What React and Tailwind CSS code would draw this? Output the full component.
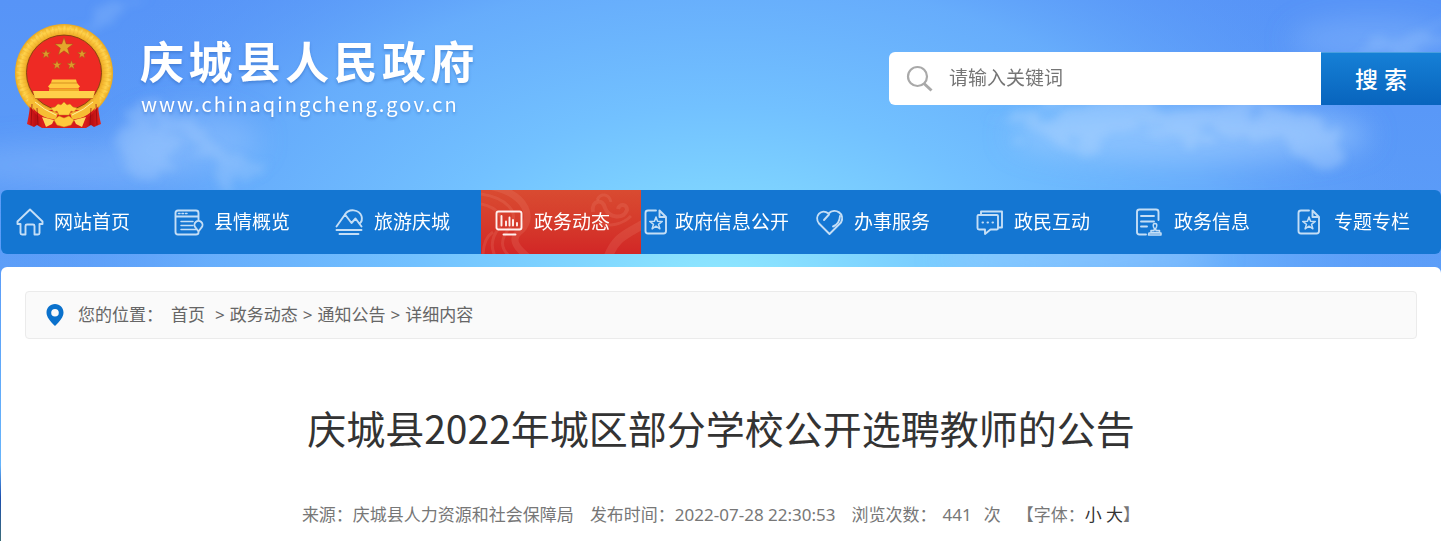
import React from "react";

const star = (cx, cy, r) =>
  Array.from({ length: 10 }, (_, i) => {
    const a = -Math.PI / 2 + (i * Math.PI) / 5;
    const q = i % 2 ? r * 0.4 : r;
    return `${(cx + q * Math.cos(a)).toFixed(2)},${(cy + q * Math.sin(a)).toFixed(2)}`;
  }).join(" ");

function Sky() {
  return (
    <svg
      className="absolute inset-x-0 top-0 h-[541px] w-full"
      viewBox="0 0 1441 541"
      preserveAspectRatio="none"
      aria-hidden="true"
    >
      <defs>
        <linearGradient id="base" x1="0" y1="0" x2="0" y2="1">
          <stop offset="0" stopColor="#5794f7" />
          <stop offset="0.5" stopColor="#5c9ef8" />
          <stop offset="0.86" stopColor="#66b4fb" />
          <stop offset="0.92" stopColor="#1c4fae" />
          <stop offset="1" stopColor="#3c6c78" />
        </linearGradient>
        <radialGradient id="glow" gradientUnits="userSpaceOnUse" cx="0" cy="0" r="1" gradientTransform="translate(720 300) scale(740 460)">
          <stop offset="0" stopColor="#92ecff" />
          <stop offset="0.2" stopColor="#80d6ff" />
          <stop offset="0.42" stopColor="#72c1ff" />
          <stop offset="0.7" stopColor="#68affc" stopOpacity="0.9" />
          <stop offset="1" stopColor="#5a98f8" stopOpacity="0" />
        </radialGradient>
        <filter id="soft" x="-30%" y="-50%" width="160%" height="200%">
          <feGaussianBlur stdDeviation="14" />
        </filter>
        <filter id="puff" x="-20%" y="-50%" width="140%" height="200%">
          <feTurbulence type="fractalNoise" baseFrequency="0.03 0.05" numOctaves="5" seed="11" result="n" />
          <feDisplacementMap in="SourceGraphic" in2="n" scale="54" xChannelSelector="R" yChannelSelector="G" />
          <feGaussianBlur stdDeviation="4" />
        </filter>
      </defs>
      <rect width="1441" height="541" fill="url(#base)" />
      <rect width="1441" height="300" fill="url(#glow)" />
      <g filter="url(#soft)" fill="#9fcbff">
        <ellipse cx="70" cy="165" rx="120" ry="22" opacity="0.3" />
        <ellipse cx="190" cy="140" rx="70" ry="30" opacity="0.4" />
        <ellipse cx="1190" cy="135" rx="180" ry="28" opacity="0.6" />
        <ellipse cx="1370" cy="40" rx="80" ry="22" opacity="0.3" />
        <ellipse cx="1080" cy="258" rx="140" ry="12" opacity="0.6" />
      </g>
      <g filter="url(#puff)" fill="#b5d9ff">
        <path d="M125 112Q150 95 165 118Q210 122 240 158Q262 160 266 168L236 184L216 162L178 140L160 170L128 166Z" opacity="0.26" />
        <path d="M990 118Q1100 96 1200 106Q1300 104 1335 130L1350 172L1310 160L1260 134L1190 142L1140 128L1080 146Z" opacity="0.34" />
        <path d="M1335 50L1441 30V50L1380 62Z" opacity="0.2" />
        <path d="M70 22Q110 2 150 0L100 24Z" opacity="0.2" />
      </g>
    </svg>
  );
}

function Emblem() {
  return (
    <svg className="h-[108px] w-[100px] shrink-0" viewBox="14 22 100 108" role="img" aria-label="国徽">
      <defs>
        <radialGradient id="gold" gradientUnits="userSpaceOnUse" cx="64" cy="73" r="49">
          <stop offset="0.74" stopColor="#c98616" />
          <stop offset="0.8" stopColor="#f2b22c" />
          <stop offset="0.9" stopColor="#ffd24a" />
          <stop offset="1" stopColor="#eba91f" />
        </radialGradient>
        <linearGradient id="drape" x1="0" y1="0" x2="1" y2="0">
          <stop offset="0" stopColor="#e3231f" />
          <stop offset="0.5" stopColor="#b90f12" />
          <stop offset="1" stopColor="#e8261f" />
        </linearGradient>
      </defs>
      <circle cx="64" cy="73" r="49" fill="url(#gold)" />
      <circle cx="64" cy="73" r="43" fill="none" stroke="#d9951c" strokeWidth="7" strokeDasharray="1 3" opacity="0.2" />
      <circle cx="64" cy="73" r="46" fill="none" stroke="#fff09a" strokeWidth="3" strokeDasharray="2 4" opacity="0.25" />
      <circle cx="64" cy="72.600" r="37.500" fill="#ee2a24" stroke="#8d4310" strokeWidth="1" />
      <polygon points={star(64, 47, 9.5)} fill="#e5a52b" stroke="#a5541a" strokeWidth="0.500" />
      {[[46, 54], [82, 54], [57, 65], [71.5, 65]].map(([x, y]) => (
        <polygon key={x} points={star(x, y, 4.8)} fill="#dd9a2a" stroke="#a5541a" strokeWidth="0.400" />
      ))}
      <path d="M52 79.500H76L77 83L80 86.500L78 88.500H50L48 86.500L51 83Z" fill="#ffc93f" />
      <path d="M51 83H77" stroke="#c67812" strokeWidth="0.700" />
      <path d="M49 88.500H79V92H49Z" fill="#eda827" />
      <path d="M33 91H95L93 98.500H35Z" fill="#ffd04a" />
      <path d="M35 98.500H93" stroke="#b9540f" strokeWidth="0.600" />
      <path d="M29 97C31 105 29 115 27 124L34 127L37 125L42 128H45L43 111Z" fill="url(#drape)" />
      <path d="M99 97C97 105 99 115 101 124L94 127L91 125L86 128H83L85 111Z" fill="url(#drape)" />
      <path d="M41 110L87 110L84 128H44Z" fill="#d71a1c" />
      <path d="M29 93C35 106 47 110 58 113L55 122C45 119 34 113 28 104Z" fill="#f7bd34" />
      <path d="M99 93C93 106 81 110 70 113L73 122C83 119 94 113 100 104Z" fill="#f7bd34" />
      <path d="M35 102Q44 110 56 115M93 102Q84 110 72 115" fill="none" stroke="#fff0a0" strokeWidth="1" />
      <path d="M33 108C42 119 54 120 64 120C74 120 86 119 95 108L94 112C86 122 74 123 64 123C54 123 42 122 34 112Z" fill="#d71a1c" />
      <path d="M55 107L58 104L61 105L64 102L67 105L70 104L73 107L77 108L74 112L71 111L69 115H59L57 111L54 112L51 108Z" fill="#ffd040" stroke="#d08c19" strokeWidth="0.500" />
      <path d="M54 120L59 116L64 118L69 116L74 120L71 125L64 127L57 125Z" fill="#ffc93b" stroke="#d08c19" strokeWidth="0.500" />
      <path d="M42 117L54 120L52 124L46 127Z M86 117L74 120L76 124L82 127Z" fill="#ffd65a" />
      <path d="M32 104L31 125M37 108L38 125M96 104L97 125M91 108L90 125" stroke="#8f090e" strokeWidth="0.700" />
    </svg>
  );
}

const StarDoc = () => (
  <>
    <path d="M14 4.500H6Q3.500 4.500 3.500 7V25Q3.500 27.500 6 27.500H21.500Q24 27.500 24 25V11L17.500 4.500V11H24" />
    <polygon strokeWidth="1.500" points={star(14, 17.5, 6.6)} />
  </>
);

const icons = {
  home: (
    <path d="M2.500 15.500L15 3.500L27.500 15.500V18H24.500V27Q24.500 28.500 23 28.500H19.500V20Q19.500 18.500 18 18.500H12Q10.500 18.500 10.500 20V28.500H7Q5.500 28.500 5.500 27V18H2.500Z" />
  ),
  profile: (
    <>
      <path d="M23.500 14V7Q23.500 4.500 21 4.500H3Q0.500 4.500 0.500 7V26Q0.500 28.500 3 28.500H21Q23.500 28.500 23.500 26.500M0.500 10.500H23.500" />
      <path strokeWidth="1.500" d="M3.500 7.500H5M7 7.500H8.500M10.500 7.500H12M6 15.500H18M6 19.500H18M6 23.500H21" />
      <path d="M23.500 25.500L20.500 21.500A4 4 0 1 1 26.500 21.500Z" />
    </>
  ),
  tour: (
    <>
      <path d="M1.500 20.500L10 8.500L16.500 17L20.500 12.500L26.500 20.500" />
      <path d="M10 8.500C14 2 24 3.500 26.500 10Q28 15 24.500 17.500M1.500 24H26.500M4.500 28H23.500" />
    </>
  ),
  news: (
    <>
      <rect x="1.500" y="5.500" width="25" height="18" rx="2" />
      <path d="M6.500 10V19.500M11 15.500V19.500M14.500 11.500V19.500M18 14V19.500M22 17V19.500M8.500 28.500H20.500" />
    </>
  ),
  doc: <StarDoc />,
  service: (
    <>
      <path d="M14.500 28L4 17.500C-1.500 10 6.500 2 13.500 7.500C20.500 1 30.500 8 26 16.500Z" />
      <path d="M9 14L14 8.500M25 10Q24.500 18 18 20.500" />
    </>
  ),
  talk: (
    <>
      <path d="M6 9V5.500H27V21.500H23.500" />
      <path d="M2.500 10Q2.500 9 3.500 9H22Q23 9 23 10V22Q23 23.500 22 23.500H15.500L10 28V23.500H4Q2.500 23.500 2.500 22Z" />
      <path strokeWidth="2" d="M7.500 16.500H8M12.500 16.500H13M17.500 16.500H18" />
    </>
  ),
  info: (
    <>
      <path d="M23.500 14V6Q23.500 3.500 21 3.500H4.500Q2 3.500 2 6V26Q2 28.500 4.500 28.500H11" />
      <path d="M6 10H19M6 15.500H19M6 20.500H12" />
      <path strokeWidth="1.500" d="M19 24.500Q20 22.500 18.500 21Q17.500 17.500 20 17.500Q22.500 17.500 21.500 21Q20 22.500 21 24.500H24.500V26.500H16V24.500ZM13.500 29H26V27H14Z" />
    </>
  ),
};

const items = [
  ["home", "网站首页"],
  ["profile", "县情概览"],
  ["tour", "旅游庆城"],
  ["news", "政务动态"],
  ["doc", "政府信息公开"],
  ["service", "办事服务"],
  ["talk", "政民互动"],
  ["info", "政务信息"],
  ["doc", "专题专栏"],
];

function Swirls() {
  return (
    <svg className="absolute inset-0 h-full w-full" viewBox="0 0 160 64" preserveAspectRatio="none" aria-hidden="true">
      <g fill="none" stroke="#f08a78" strokeOpacity="0.2">
        <path strokeWidth="7" d="M8 -4C48 4 54 30 38 42C28 50 38 60 48 68" />
        <path strokeWidth="3" d="M0 4C26 8 38 22 30 36C18 50 20 58 28 66M0 14C18 18 24 28 18 38C10 48 10 58 14 66M2 66C2 54 6 46 12 42" />
        <path strokeWidth="4" d="M112 22C110 10 122 8 124 18C128 28 142 30 146 20C146 13 138 14 137 19" />
        <path strokeWidth="3" d="M118 32C128 38 142 34 150 26M116 10C120 2 128 4 130 12" />
        <path strokeWidth="9" d="M126 70C134 46 146 44 166 32" />
      </g>
    </svg>
  );
}

function NavItem({ icon, label }) {
  const active = icon === "news";
  const wide = label.length > 4;
  return (
    <li className={active ? "relative bg-linear-to-b from-[#d94b31] to-[#d22626]" : "relative"}>
      {active && <Swirls />}
      <a
        href="#"
        aria-current={active ? "page" : undefined}
        className={"relative flex h-16 items-center whitespace-nowrap text-[19px] text-white " + (wide ? "pl-px" : "pl-3.5")}
      >
        <svg
          className={"h-8 w-[30px] shrink-0 overflow-visible " + (wide ? "mr-[3px]" : "mr-[9px]")}
          viewBox="0 0 30 32"
          fill="none"
          stroke={active ? "#fff0ee" : "#c4def6"}
          strokeWidth="1.900"
          strokeLinejoin="round"
          strokeLinecap="round"
          aria-hidden="true"
        >
          {icons[icon]}
        </svg>
        <span>{label}</span>
      </a>
    </li>
  );
}

export default function App() {
  return (
    <div className="relative flex min-h-screen flex-col overflow-hidden bg-[#5c9ef8] pl-px font-['Noto_Sans','Noto_Sans_CJK_SC',sans-serif]">
      <Sky />
      <header className="relative flex h-[190px] items-start justify-between">
        <a href="#" className="flex pt-[22px] pl-[13px] text-white">
          <Emblem />
          <span className="flex flex-col pt-2 pl-[26px] text-shadow-[0_2px_3px_rgb(30_80_160/0.35)]">
            <span className="font-['Noto_Sans_CJK_SC',sans-serif] text-[44px] leading-[60px] font-bold tracking-widest">庆城县人民政府</span>
            <span className="pl-px font-['Noto_Sans_CJK_SC',sans-serif] text-[20px] leading-7 tracking-widest">www.chinaqingcheng.gov.cn</span>
          </span>
        </a>
        <form className="mt-[52px] flex h-[53px] w-[552px]" onSubmit={(e) => e.preventDefault()}>
          <label className="flex min-w-0 flex-1 items-center rounded-l-md bg-white pl-4">
            <svg className="size-7 shrink-0" viewBox="0 0 28 28" fill="none" stroke="#a9a9a9" strokeWidth="2.200" aria-hidden="true">
              <circle cx="12.500" cy="11.500" r="9.500" />
              <path strokeWidth="3" d="M19 18.500L26.500 25.500" />
            </svg>
            <input
              type="text"
              aria-label="关键词"
              placeholder="请输入关键词"
              className="ml-4 min-w-0 flex-1 bg-transparent text-[19px] outline-none placeholder:text-[#757575]"
            />
          </label>
          <button
            type="submit"
            className="w-[120px] border-t border-[#4a9fdf] bg-linear-to-b from-[#1680d6] to-[#0864bd] text-[23px] font-medium text-white"
          >
            搜 索
          </button>
        </form>
      </header>

      <nav className="relative overflow-hidden rounded-md bg-[#1476d2]">
        <ul className="grid grid-cols-9">
          {items.map(([icon, label]) => (
            <NavItem key={label} icon={icon} label={label} />
          ))}
        </ul>
      </nav>

      <main className="relative mt-[13px] flex-1 rounded-t-md bg-white px-6 pt-6">
        <nav
          aria-label="您的位置"
          className="flex h-12 items-center rounded-sm border border-[#ebebeb] bg-[#fafafa] pl-5 text-[17px] whitespace-pre text-[#666]"
        >
          <svg className="mr-3.5 h-[22px] w-[18px]" viewBox="0 0 18 22" aria-hidden="true">
            <path
              fill="#0a71cc"
              fillRule="evenodd"
              d="M9 0C4 0 0.500 3.800 0.500 8.500C0.500 13 4 17 9 22C14 17 17.500 13 17.500 8.500C17.500 3.800 14 0 9 0ZM9 5A3.800 3.800 0 1 1 9 12.600A3.800 3.800 0 1 1 9 5Z"
            />
          </svg>
          <span className="mr-2">您的位置：</span>
          <a href="#">首页</a>
          <span className="mr-[5px] ml-2.5">&gt;</span>
          <a href="#">政务动态</a>
          <span className="mx-[5px]">&gt;</span>
          <a href="#">通知公告</a>
          <span className="mx-[5px]">&gt;</span>
          <span>详细内容</span>
        </nav>
        <h1 className="mt-[60px] text-center font-['Noto_Sans_CJK_SC',sans-serif] text-[39px] leading-[56px] text-[#333]">
          庆城县2022年城区部分学校公开选聘教师的公告
        </h1>
        <div className="mt-12 flex justify-center text-[17px] leading-6 whitespace-nowrap text-[#777]">
          <span>来源：庆城县人力资源和社会保障局</span>
          <span className="ml-4">发布时间：2022-07-28 22:30:53</span>
          <span className="ml-4">浏览次数：</span>
          <span className="ml-1.5">441</span>
          <span className="ml-3">次</span>
          <span className="ml-4">
            【字体：
            <button type="button" className="text-[#333]">小</button>{" "}
            <button type="button" className="text-[#333]">大</button>】
          </span>
        </div>
      </main>
    </div>
  );
}
